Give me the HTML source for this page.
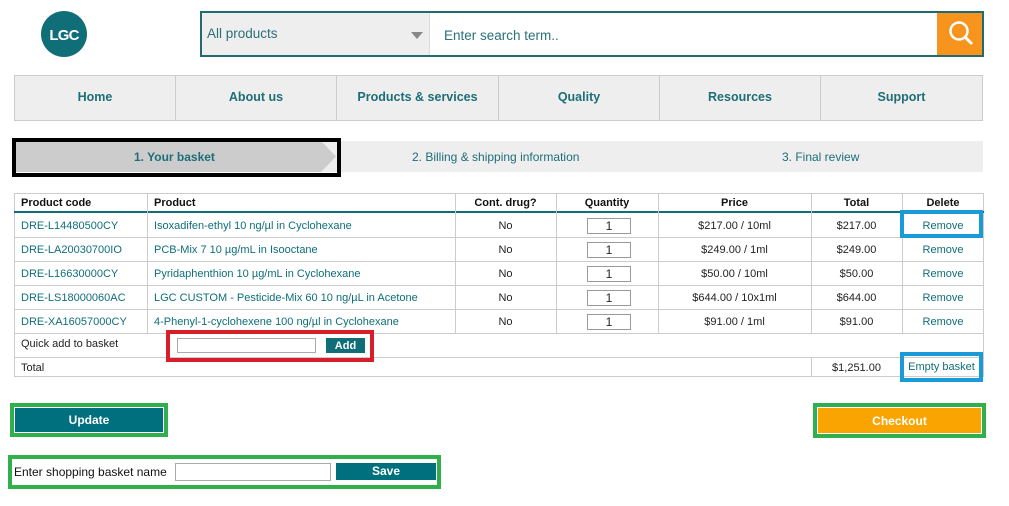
<!DOCTYPE html>
<html><head><meta charset="utf-8">
<style>
*{box-sizing:border-box;margin:0;padding:0}
body{width:1009px;height:506px;background:#fff;font-family:"Liberation Sans",Arial,sans-serif;position:relative;overflow:hidden;color:#222}
.a{position:absolute}
.t{color:#0f6e78}
.nav{position:absolute;top:75px;height:46px;background:#eee;border:1px solid #ccc;display:flex;align-items:center;justify-content:center;font-weight:bold;font-size:12.5px;color:#1e6e78;padding-bottom:2px}
.cell{position:absolute;font-size:11px;display:flex;align-items:center;height:24px;margin-top:1px}
.vl{position:absolute;width:1px;background:#ccc}
.hl{position:absolute;height:1px;background:#ccc;left:14px;width:970px}
.qty{position:absolute;width:44px;height:16px;border:1px solid #999;font-size:12px;text-align:center;line-height:14px}
</style></head><body>
<svg class="a" style="left:40px;top:10px" width="48" height="48"><circle cx="24" cy="24" r="23" fill="#0f6e78"/><text x="24" y="30" fill="#fff" font-family="Liberation Sans" font-weight="bold" font-size="15" text-anchor="middle" letter-spacing="-0.8">LGC</text></svg>

<div class="a" style="left:200px;top:11px;width:784px;height:46px;border:2px solid #1f6b6f;background:#fff"></div>
<div class="a" style="left:202px;top:13px;width:228px;height:42px;background:#eee;border-right:1px solid #ddd"></div>
<div class="a" style="left:207px;top:26px;font-size:13.5px;color:#2a7078">All products</div>
<div class="a" style="left:411px;top:32px;width:0;height:0;border-left:6px solid transparent;border-right:6px solid transparent;border-top:7px solid #888"></div>
<div class="a" style="left:444px;top:28px;font-size:13.5px;color:#2a7078">Enter search term..</div>
<div class="a" style="left:937px;top:13px;width:45px;height:42px;background:#f7941d"></div>
<svg class="a" style="left:945px;top:18px" width="30" height="30"><circle cx="14" cy="13" r="8.5" fill="none" stroke="#fff" stroke-width="2.5"/><line x1="20" y1="19" x2="27" y2="26" stroke="#fff" stroke-width="3"/></svg>

<div class="nav" style="left:14px;width:162px">Home</div>
<div class="nav" style="left:175px;width:162px">About us</div>
<div class="nav" style="left:336px;width:163px">Products &amp; services</div>
<div class="nav" style="left:498px;width:162px">Quality</div>
<div class="nav" style="left:659px;width:162px">Resources</div>
<div class="nav" style="left:820px;width:163px">Support</div>

<div class="a" style="left:14px;top:141px;width:969px;height:31px;background:#eee"></div>
<svg class="a" style="left:14px;top:141px" width="325" height="31"><polygon points="0,0 307,0 322,15.5 307,31 0,31" fill="#ccc"/></svg>
<div class="a" style="left:12px;top:138px;width:329px;height:39px;border:4px solid #000"></div>
<div class="a" style="left:134px;top:150px;font-size:12px;font-weight:bold;color:#1e6e78">1. Your basket</div>
<div class="a" style="left:412px;top:150px;font-size:12px;color:#1e6e78">2. Billing &amp; shipping information</div>
<div class="a" style="left:782px;top:150px;font-size:12px;color:#1e6e78">3. Final review</div>

<div class="a" style="left:14px;top:193px;width:970px;height:184px;border:1px solid #ccc"></div>
<div class="a" style="left:14px;top:211px;width:970px;height:2px;background:#0f6e78"></div>
<div class="hl" style="top:237px"></div><div class="hl" style="top:261px"></div><div class="hl" style="top:285px"></div><div class="hl" style="top:309px"></div><div class="hl" style="top:333px"></div><div class="hl" style="top:357px"></div>
<div class="vl" style="left:147px;top:193px;height:140px"></div>
<div class="vl" style="left:455px;top:193px;height:140px"></div>
<div class="vl" style="left:556px;top:193px;height:140px"></div>
<div class="vl" style="left:658px;top:193px;height:140px"></div>
<div class="vl" style="left:811px;top:193px;height:140px"></div>
<div class="vl" style="left:902px;top:193px;height:140px"></div>
<div class="vl" style="left:811px;top:357px;height:20px"></div>
<div class="vl" style="left:902px;top:357px;height:20px"></div>

<div class="cell" style="top:190px;left:21px;font-weight:bold;color:#111">Product code</div>
<div class="cell" style="top:190px;left:154px;font-weight:bold;color:#111">Product</div>
<div class="cell" style="top:190px;left:455px;width:101px;justify-content:center;font-weight:bold;color:#111">Cont. drug?</div>
<div class="cell" style="top:190px;left:556px;width:102px;justify-content:center;font-weight:bold;color:#111">Quantity</div>
<div class="cell" style="top:190px;left:658px;width:153px;justify-content:center;font-weight:bold;color:#111">Price</div>
<div class="cell" style="top:190px;left:811px;width:91px;justify-content:center;font-weight:bold;color:#111">Total</div>
<div class="cell" style="top:190px;left:902px;width:82px;justify-content:center;font-weight:bold;color:#111">Delete</div>

<div class="cell t" style="top:213px;left:21px">DRE-L14480500CY</div>
<div class="cell t" style="top:213px;left:154px">Isoxadifen-ethyl 10 ng/µl in Cyclohexane</div>
<div class="cell t" style="top:237px;left:21px">DRE-LA20030700IO</div>
<div class="cell t" style="top:237px;left:154px">PCB-Mix 7 10 µg/mL in Isooctane</div>
<div class="cell t" style="top:261px;left:21px">DRE-L16630000CY</div>
<div class="cell t" style="top:261px;left:154px">Pyridaphenthion 10 µg/mL in Cyclohexane</div>
<div class="cell t" style="top:285px;left:21px">DRE-LS18000060AC</div>
<div class="cell t" style="top:285px;left:154px">LGC CUSTOM - Pesticide-Mix 60 10 ng/µL in Acetone</div>
<div class="cell t" style="top:309px;left:21px">DRE-XA16057000CY</div>
<div class="cell t" style="top:309px;left:154px">4-Phenyl-1-cyclohexene 100 ng/µl in Cyclohexane</div>

<div class="cell" style="top:213px;left:455px;width:101px;justify-content:center">No</div>
<div class="cell" style="top:237px;left:455px;width:101px;justify-content:center">No</div>
<div class="cell" style="top:261px;left:455px;width:101px;justify-content:center">No</div>
<div class="cell" style="top:285px;left:455px;width:101px;justify-content:center">No</div>
<div class="cell" style="top:309px;left:455px;width:101px;justify-content:center">No</div>

<div class="qty" style="left:587px;top:218px">1</div>
<div class="qty" style="left:587px;top:242px">1</div>
<div class="qty" style="left:587px;top:266px">1</div>
<div class="qty" style="left:587px;top:290px">1</div>
<div class="qty" style="left:587px;top:314px">1</div>

<div class="cell" style="top:213px;left:658px;width:153px;justify-content:center">$217.00 / 10ml</div>
<div class="cell" style="top:237px;left:658px;width:153px;justify-content:center">$249.00 / 1ml</div>
<div class="cell" style="top:261px;left:658px;width:153px;justify-content:center">$50.00 / 10ml</div>
<div class="cell" style="top:285px;left:658px;width:153px;justify-content:center">$644.00 / 10x1ml</div>
<div class="cell" style="top:309px;left:658px;width:153px;justify-content:center">$91.00 / 1ml</div>

<div class="cell" style="top:213px;left:811px;width:91px;justify-content:center">$217.00</div>
<div class="cell" style="top:237px;left:811px;width:91px;justify-content:center">$249.00</div>
<div class="cell" style="top:261px;left:811px;width:91px;justify-content:center">$50.00</div>
<div class="cell" style="top:285px;left:811px;width:91px;justify-content:center">$644.00</div>
<div class="cell" style="top:309px;left:811px;width:91px;justify-content:center">$91.00</div>

<div class="cell t" style="top:213px;left:902px;width:82px;justify-content:center">Remove</div>
<div class="cell t" style="top:237px;left:902px;width:82px;justify-content:center">Remove</div>
<div class="cell t" style="top:261px;left:902px;width:82px;justify-content:center">Remove</div>
<div class="cell t" style="top:285px;left:902px;width:82px;justify-content:center">Remove</div>
<div class="cell t" style="top:309px;left:902px;width:82px;justify-content:center">Remove</div>
<div class="a" style="left:900px;top:210px;width:83px;height:28px;border:4px solid #1a9ad6"></div>

<div class="cell" style="top:331px;left:21px">Quick add to basket</div>
<div class="a" style="left:166px;top:330px;width:208px;height:32px;border:4px solid #d71f2a"></div>
<div class="a" style="left:177px;top:338px;width:139px;height:15px;border:1px solid #aaa"></div>
<div class="a" style="left:326px;top:338px;width:39px;height:15px;background:#0f6e78;color:#fff;font-size:11px;font-weight:bold;text-align:center;line-height:16px">Add</div>

<div class="cell" style="top:355px;left:21px">Total</div>
<div class="cell" style="top:355px;left:811px;width:91px;justify-content:center">$1,251.00</div>
<div class="a" style="left:900px;top:352px;width:83px;height:30px;border:4px solid #1a9ad6;font-size:11px;color:#0f6e78;display:flex;align-items:center;justify-content:center">Empty basket</div>

<div class="a" style="left:10px;top:403px;width:158px;height:34px;border:4px solid #30b04c;background:#fff;padding:1px"><div style="background:#00707e;height:100%;color:#fff;font-weight:bold;font-size:12px;display:flex;align-items:center;justify-content:center">Update</div></div>
<div class="a" style="left:813px;top:403px;width:173px;height:35px;border:4px solid #30b04c;background:#fff;padding:1px"><div style="background:#f9a400;height:100%;color:#fff;font-weight:bold;font-size:12px;display:flex;align-items:center;justify-content:center">Checkout</div></div>

<div class="a" style="left:8px;top:455px;width:433px;height:34px;border:4px solid #30b04c"></div>
<div class="a" style="left:14px;top:465px;font-size:12px;color:#111">Enter shopping basket name</div>
<div class="a" style="left:175px;top:463px;width:156px;height:18px;border:1px solid #aaa"></div>
<div class="a" style="left:336px;top:463px;width:100px;height:17px;background:#00707e;color:#fff;font-weight:bold;font-size:12px;text-align:center;line-height:17px">Save</div>
</body></html>
